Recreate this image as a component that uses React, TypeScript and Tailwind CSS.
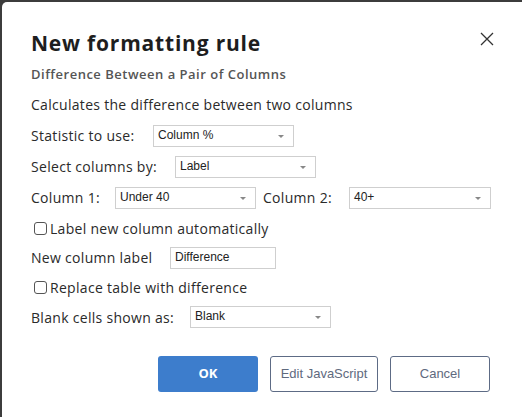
import React from 'react';

const FONT = { fontFamily: '"Open Sans", "Noto Sans", sans-serif' };
const ARIAL = { fontFamily: '"Liberation Sans", Arial, sans-serif' };

function Select({ value, width }: { value: string; width: string }) {
  return (
    <div
      className={`relative flex h-[22px] items-center border border-[#cfcfcf] bg-white pb-[2px] pl-[4px] text-[12px] tracking-normal text-[#222] ${width}`}
      style={ARIAL}
    >
      {value}
      <span className="absolute right-[9px] top-[9px] h-0 w-0 border-x-[3px] border-t-[3px] border-x-transparent border-t-[#888]" />
    </div>
  );
}

function Checkbox() {
  return <span className="mr-[3px] inline-block h-[13px] w-[13px] rounded-[3px] border border-[#555] bg-white" />;
}

export default function App() {
  return (
    <div className="h-[417px] w-[522px] overflow-hidden bg-[#3c3c3c] pl-[2px] pt-[2px]" style={FONT}>
      <div className="relative h-full w-full rounded-tl-[5px] bg-white pl-[29px] pt-[27px] text-[14px] tracking-[0.3px] text-[#2a2a2a]">
        {/* Close */}
        <button className="absolute left-[478px] top-[30px] p-0">
          <svg width="14" height="14" viewBox="0 0 14 14">
            <path d="M1 1 L13 13 M13 1 L1 13" stroke="#333" strokeWidth="1.3" fill="none" />
          </svg>
        </button>

        {/* Header */}
        <h2 className="h-[28px] text-[21px] font-bold leading-[28px] tracking-[0.8px] text-[#1e1e1e]">
          New formatting rule
        </h2>
        <p className="mt-[7px] h-[20px] text-[13px] font-semibold leading-[20px] tracking-[0.5px] text-[#555]">
          Difference Between a Pair of Columns
        </p>
        <p className="mt-[11px] h-[20px] leading-[20px]">Calculates the difference between two columns</p>

        {/* Form rows */}
        <div className="mt-[5px]">
          <div className="flex h-[31px] items-center">
            <span className="w-[122px]">Statistic to use:</span>
            <Select value="Column %" width="w-[141px]" />
          </div>
          <div className="flex h-[31px] items-center">
            <span className="w-[144px]">Select columns by:</span>
            <Select value="Label" width="w-[141px]" />
          </div>
          <div className="flex h-[31px] items-center">
            <span className="w-[84px]">Column 1:</span>
            <Select value="Under 40" width="w-[141px]" />
            <span className="ml-[7px] w-[86px]">Column 2:</span>
            <Select value="40+" width="w-[142px]" />
          </div>
          <div className="flex h-[30px] items-center pl-[3px]">
            <Checkbox />
            <span>Label new column automatically</span>
          </div>
          <div className="flex h-[29px] items-center">
            <span className="w-[139px]">New column label</span>
            <div
              className="flex h-[22px] w-[106px] items-center border border-[#cfcfcf] pb-[2px] pl-[4px] text-[12px] tracking-normal text-[#222]"
              style={ARIAL}
            >
              Difference
            </div>
          </div>
          <div className="flex h-[31px] items-center pl-[3px]">
            <Checkbox />
            <span>Replace table with difference</span>
          </div>
          <div className="flex h-[28px] items-center">
            <span className="w-[159px]">Blank cells shown as:</span>
            <Select value="Blank" width="w-[141px]" />
          </div>
        </div>

        {/* Buttons */}
        <div className="mt-[25px] flex pl-[127px] tracking-normal">
          <button className="h-[36px] w-[100px] rounded-[3px] bg-[#3d7dcc] text-[13px] font-bold text-white">OK</button>
          <button
            className="ml-[12px] h-[36px] w-[108px] rounded-[3px] border border-[#5d6b85] text-[13px] text-[#5f6a7e]"
            style={ARIAL}
          >
            Edit JavaScript
          </button>
          <button
            className="ml-[12px] h-[36px] w-[100px] rounded-[3px] border border-[#5d6b85] text-[13px] text-[#5f6a7e]"
            style={ARIAL}
          >
            Cancel
          </button>
        </div>
      </div>
    </div>
  );
}
